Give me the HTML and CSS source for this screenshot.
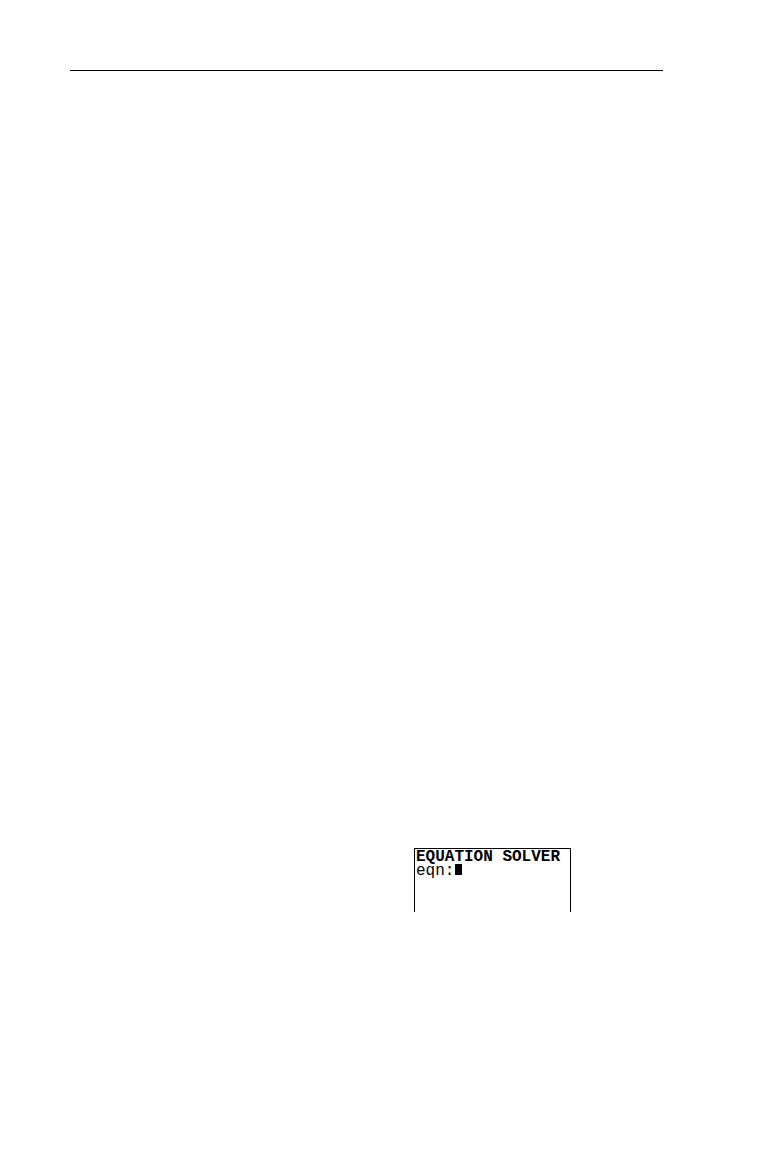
FILE: index.html
```html
<!DOCTYPE html>
<html lang="en">
<head>
<meta charset="utf-8">
<title>Equation Solver</title>
<link rel="stylesheet" href="styles.css">
</head>
<body>
<main class="page">
  <hr class="rule">
  <section class="screen">
    <h1 class="title">EQUATION SOLVER</h1>
    <div class="row">
      <label class="label" for="eqn">eqn:</label>
      <input class="entry" id="eqn" type="text">
    </div>
  </section>
</main>
</body>
</html>
```

FILE: styles.css
```css
* {
  box-sizing: border-box;
}

body {
  margin: 0;
  background: #fff;
  color: #000;
}

.page {
  display: flex;
  flex-direction: column;
  min-height: 100vh;
  padding: 70px 107px 70px 70px;
}

.rule {
  width: 100%;
  margin: 0 0 777px;
  border: 0;
  border-top: 1px solid #000;
}

.screen {
  align-self: flex-end;
  min-height: 64px;
  margin-right: 92px;
  padding: 1px 10px 0 1px;
  border: 1px solid #000;
  border-bottom: 0;
  font-family: "Liberation Mono", monospace;
  font-size: 16px;
  line-height: 14px;
}

.title {
  margin: 0;
  font-size: 16px;
  font-weight: bold;
  white-space: nowrap;
}

.row {
  display: flex;
}

/* The block cursor is painted at the start of the empty entry. */
.entry {
  flex: 1;
  width: 0;
  min-width: 0;
  height: 14px;
  padding: 0;
  border: 0;
  outline: 0;
  background: linear-gradient(#000, #000) 1px 0 / 7px 11px no-repeat;
  font: inherit;
}
```
